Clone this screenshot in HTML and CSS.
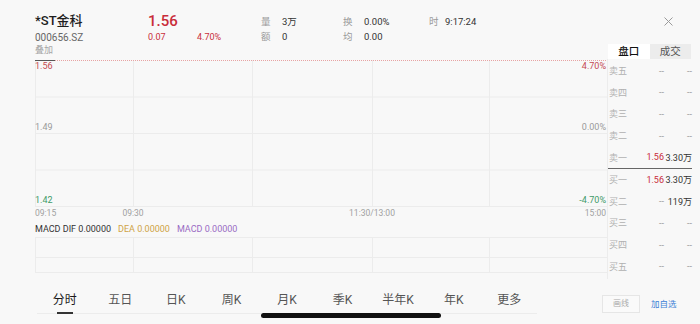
FILE: index.html
```html
<!DOCTYPE html>
<html lang="zh">
<head>
<meta charset="utf-8">
<title>*ST金科</title>
<link rel="stylesheet" href="styles.css">
</head>
<body>
<div class="app">
  <div class="main">
    <div class="left">
      <div class="quote">
        <div class="name">*ST金科</div>
        <div class="price">1.56</div>
        <div class="kv"><span class="k">量</span><span class="v">3万</span></div>
        <div class="kv"><span class="k">换</span><span class="v">0.00%</span></div>
        <div class="kv"><span class="k k-time">时</span><span class="v">9:17:24</span></div>

        <div class="code">000656.SZ</div>
        <div class="chg"><span class="chg-abs">0.07</span><span>4.70%</span></div>
        <div class="kv"><span class="k">额</span><span class="v">0</span></div>
        <div class="kv"><span class="k">均</span><span class="v">0.00</span></div>
        <div></div>

        <div class="overlay">叠加</div>
      </div>

      <div class="chart">
        <svg class="grid" width="572" height="147" viewBox="0 0 572 147">
          <g stroke="#ececec" stroke-width="1" fill="none">
            <line x1="0.5" y1="0" x2="0.5" y2="147"/>
            <line x1="98.5" y1="0" x2="98.5" y2="147"/>
            <line x1="217.5" y1="0" x2="217.5" y2="147"/>
            <line x1="337.5" y1="0" x2="337.5" y2="147"/>
            <line x1="454.5" y1="0" x2="454.5" y2="147"/>
            <line x1="0" y1="37" x2="572" y2="37"/>
            <line x1="0" y1="73.5" x2="572" y2="73.5"/>
            <line x1="0" y1="110" x2="572" y2="110"/>
            <line x1="0" y1="146.5" x2="572" y2="146.5"/>
          </g>
          <line x1="0" y1="0.5" x2="572" y2="0.5" stroke="#e7a3a3" stroke-width="1" stroke-dasharray="1 1"/>
          <line x1="0" y1="0.5" x2="20" y2="0.5" stroke="#555" stroke-width="1"/>
        </svg>
        <span class="ylab l up top">1.56</span>
        <span class="ylab l mid">1.49</span>
        <span class="ylab l down bot">1.42</span>
        <span class="ylab r up top">4.70%</span>
        <span class="ylab r mid">0.00%</span>
        <span class="ylab r down bot">-4.70%</span>
      </div>

      <div class="timeaxis">
        <span class="t t0">09:15</span>
        <span class="t t1">09:30</span>
        <span class="t t2">11:30/13:00</span>
        <span class="t t3">15:00</span>
      </div>

      <div class="macd-legend">
        <span class="dif">MACD DIF 0.00000</span>
        <span class="dea">DEA 0.00000</span>
        <span class="macd">MACD 0.00000</span>
      </div>

      <svg class="macd-panel" width="572" height="36" viewBox="0 0 572 36">
        <g stroke="#ececec" stroke-width="1" fill="none">
          <line x1="0" y1="0.5" x2="572" y2="0.5"/>
          <line x1="0" y1="20.5" x2="572" y2="20.5"/>
          <line x1="0" y1="35.5" x2="572" y2="35.5"/>
          <line x1="0.5" y1="0" x2="0.5" y2="36"/>
          <line x1="98.5" y1="0" x2="98.5" y2="36"/>
          <line x1="217.5" y1="0" x2="217.5" y2="36"/>
          <line x1="337.5" y1="0" x2="337.5" y2="36"/>
          <line x1="454.5" y1="0" x2="454.5" y2="36"/>
        </g>
      </svg>
    </div>

    <div class="right">
      <div class="close-row">
        <svg class="close" width="9" height="9" viewBox="0 0 9 9">
          <path d="M0.5 0.5 L8.5 8.5 M8.5 0.5 L0.5 8.5" stroke="#9a9a9a" stroke-width="1" fill="none"/>
        </svg>
      </div>
      <div class="tabs">
        <span class="tab active">盘口</span>
        <span class="tab">成交</span>
      </div>
      <div class="book">
        <div class="row"><span class="lbl">卖五</span><span class="p">--</span><span class="q dash">--</span></div>
        <div class="row"><span class="lbl">卖四</span><span class="p">--</span><span class="q dash">--</span></div>
        <div class="row"><span class="lbl">卖三</span><span class="p">--</span><span class="q dash">--</span></div>
        <div class="row"><span class="lbl">卖二</span><span class="p">--</span><span class="q dash">--</span></div>
        <div class="row"><span class="lbl">卖一</span><span class="p up">1.56</span><span class="q">3.30万</span></div>
        <div class="sep"></div>
        <div class="row"><span class="lbl">买一</span><span class="p up">1.56</span><span class="q">3.30万</span></div>
        <div class="row"><span class="lbl">买二</span><span class="p">--</span><span class="q">119万</span></div>
        <div class="row"><span class="lbl">买三</span><span class="p">--</span><span class="q dash">--</span></div>
        <div class="row"><span class="lbl">买四</span><span class="p">--</span><span class="q dash">--</span></div>
        <div class="row"><span class="lbl">买五</span><span class="p">--</span><span class="q dash">--</span></div>
      </div>
    </div>
  </div>

  <div class="tabbar">
    <div class="periods">
      <span class="period active">分时</span>
      <span class="period">五日</span>
      <span class="period">日K</span>
      <span class="period">周K</span>
      <span class="period">月K</span>
      <span class="period">季K</span>
      <span class="period">半年K</span>
      <span class="period">年K</span>
      <span class="period">更多</span>
    </div>
    <span class="btn-draw">画线</span>
    <span class="btn-add">加自选</span>
  </div>

  <div class="home-indicator"></div>
</div>
</body>
</html>
```

FILE: styles.css
```css
* { box-sizing: border-box; }

html, body {
  margin: 0;
  padding: 0;
}

body {
  background: #f8f8f8;
  font-family: Roboto, "Noto Sans CJK SC", sans-serif;
  color: #222;
  width: 700px;
  height: 324px;
  overflow: hidden;
}

.app {
  position: relative;
  width: 700px;
  height: 324px;
}

.main {
  display: flex;
  height: 280px;
}

.left {
  width: 607px;
  padding-left: 35px;
}

.right {
  width: 85px;
}

/* quote header */
.quote {
  display: grid;
  grid-template-columns: 113px 113px 82px 86px 1fr;
  grid-template-rows: 16px 15px 13px;
  padding-top: 13px;
  height: 60px;
  align-items: center;
}

.name {
  font-size: 13px;
  font-weight: 500;
  color: #1e1e1e;
  line-height: 16px;
}

.price {
  font-size: 15px;
  font-weight: 500;
  color: #c92d3a;
  line-height: 16px;
}

.code {
  font-size: 10px;
  color: #666;
  line-height: 15px;
  padding-top: 1px;
}

.chg {
  display: flex;
  font-size: 9px;
  color: #c92d3a;
  line-height: 15px;
  padding-top: 1px;
}

.chg-abs { width: 49px; }

.kv {
  display: flex;
  font-size: 9.5px;
  line-height: 15px;
}

.k {
  width: 21px;
  color: #9a9a9a;
}

.k-time { width: 16px; }

.v { color: #333; }

.overlay {
  grid-column: 1 / -1;
  font-size: 9px;
  color: #a5a5a5;
  line-height: 13px;
}

/* chart */
.chart {
  position: relative;
  width: 572px;
  height: 147px;
}

.grid { display: block; }

.ylab {
  position: absolute;
  font-size: 9px;
  line-height: 12px;
  color: #9a9a9a;
}

.ylab.l { left: 0; }
.ylab.r { right: 1px; }
.ylab.top { top: 0; }
.ylab.mid { top: 61px; }
.ylab.bot { top: 134px; }

.up { color: #c92d3a; }
.down { color: #3a9a62; }

.ylab.up { color: #c44a52; }
.ylab.down { color: #3f9a68; }

.timeaxis {
  position: relative;
  width: 572px;
  height: 14px;
  font-size: 8.5px;
  color: #a0a0a0;
}

.t {
  position: absolute;
  top: 0;
  line-height: 13px;
}

.t0 { left: 0; }
.t1 { left: 98px; transform: translateX(-50%); }
.t2 { left: 337px; transform: translateX(-50%); }
.t3 { right: 1px; }

.macd-legend {
  display: flex;
  gap: 7px;
  height: 16px;
  font-size: 9px;
  line-height: 16px;
}

.dif { color: #333; }
.dea { color: #cfa446; }
.macd { color: #9a6cc4; }

.macd-panel { display: block; }

/* right column */
.close-row {
  height: 44px;
  padding-top: 17px;
  padding-left: 57px;
}

.close { display: block; }

.tabs {
  display: flex;
  margin-left: 1px;
  width: 83px;
  height: 15px;
  background: #ececec;
}

.tab {
  flex: 1;
  text-align: center;
  font-size: 10.5px;
  line-height: 15px;
  color: #555;
}

.tab.active {
  background: #fff;
  color: #111;
  font-weight: 500;
}

.book {
  border-left: 1px solid #ececec;
  height: 220px;
  padding-top: 1px;
}

.row {
  display: grid;
  grid-template-columns: 1fr 24px 28px;
  height: 21.6px;
  align-items: center;
  font-size: 9px;
  padding-left: 1px;
}

.lbl { color: #b0b0b0; }

.p {
  text-align: right;
  color: #999;
}

.p.up { color: #c92d3a; }

.q {
  text-align: right;
  color: #333;
}

.q.dash { color: #999; }

.sep {
  height: 1px;
  background: #666;
}

/* bottom tab bar */
.tabbar {
  display: flex;
  align-items: flex-start;
  padding-left: 37px;
}

.periods {
  display: grid;
  grid-template-columns: repeat(9, 1fr);
  width: 500px;
  border-bottom: 1px solid #ececec;
  padding-top: 11px;
}

.period {
  position: relative;
  text-align: center;
  font-size: 12px;
  line-height: 18px;
  height: 22px;
  color: #555;
}

.period.active { color: #1a1a1a; }

.period.active::after {
  content: "";
  position: absolute;
  left: 50%;
  bottom: -1px;
  width: 16px;
  height: 2px;
  margin-left: -8px;
  background: #333;
}

.btn-draw {
  margin-left: 65px;
  margin-top: 15px;
  width: 38px;
  height: 18px;
  border: 1px solid #e6e6e6;
  background: #fafafa;
  font-size: 8px;
  line-height: 16px;
  text-align: center;
  color: #aaa;
}

.btn-add {
  margin-left: 11px;
  margin-top: 15px;
  font-size: 8.5px;
  line-height: 18px;
  color: #3d7fd6;
}

.home-indicator {
  position: absolute;
  left: 261px;
  top: 313px;
  width: 180px;
  height: 5px;
  border-radius: 3px;
  background: #111;
}
```
